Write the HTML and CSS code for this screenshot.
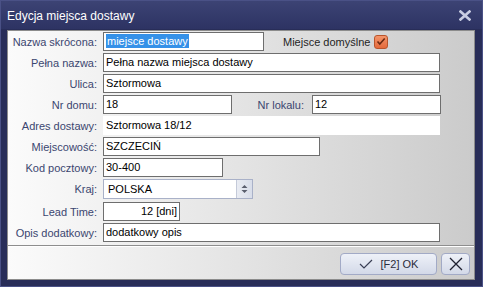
FILE: index.html
```html
<!DOCTYPE html>
<html lang="pl">
<head>
    <meta charset="UTF-8">
    <title>Edycja miejsca dostawy</title>
    <link rel="stylesheet" href="styles.css">
</head>
<body>
    <div class="window">
        <div class="titlebar">
            <span class="title">Edycja miejsca dostawy</span>
            <svg class="close" width="12" height="11" viewBox="0 0 12 11">
                <path d="M1.5 1.5 L10.5 9.5 M10.5 1.5 L1.5 9.5" stroke="#c9cde2" stroke-width="2.6" stroke-linecap="square"/>
            </svg>
        </div>

        <div class="panel">
            <div class="form">
                <div class="row">
                    <label class="lbl">Nazwa skrócona:</label>
                    <div class="field w-short"><span class="selected">miejsce dostawy</span></div>
                    <span class="default-text">Miejsce domyślne</span>
                    <span class="checkbox">
                        <svg width="10" height="9" viewBox="0 0 10 9">
                            <path d="M1.5 4.5 L3.8 7 L8.7 1.5" stroke="#6b2a12" stroke-width="1.6" fill="none"/>
                        </svg>
                    </span>
                </div>
                <div class="row">
                    <label class="lbl">Pełna nazwa:</label>
                    <div class="field w-full">Pełna nazwa miejsca dostawy</div>
                </div>
                <div class="row">
                    <label class="lbl">Ulica:</label>
                    <div class="field w-full">Sztormowa</div>
                </div>
                <div class="row">
                    <label class="lbl">Nr domu:</label>
                    <div class="field w-half">18</div>
                    <label class="lbl lbl-mid">Nr lokalu:</label>
                    <div class="field w-half">12</div>
                </div>
                <div class="row">
                    <label class="lbl">Adres dostawy:</label>
                    <div class="field w-full plain">Sztormowa 18/12</div>
                </div>
                <div class="row">
                    <label class="lbl">Miejscowość:</label>
                    <div class="field w-city">SZCZECIŃ</div>
                </div>
                <div class="row">
                    <label class="lbl">Kod pocztowy:</label>
                    <div class="field w-zip">30-400</div>
                </div>
                <div class="row row-combo">
                    <label class="lbl">Kraj:</label>
                    <div class="field combo w-combo">
                        <span class="combo-text">POLSKA</span>
                        <span class="spin">
                            <svg width="7" height="10" viewBox="0 0 7 10">
                                <path d="M3.5 1 L6.5 4 L0.5 4 Z M0.5 6 L6.5 6 L3.5 9 Z" fill="#5a5f6e"/>
                            </svg>
                        </span>
                    </div>
                </div>
                <div class="row">
                    <label class="lbl">Lead Time:</label>
                    <div class="field w-lead num">12 [dni]</div>
                </div>
                <div class="row">
                    <label class="lbl">Opis dodatkowy:</label>
                    <div class="field w-full">dodatkowy opis</div>
                </div>
            </div>

            <div class="footer">
                <button class="btn btn-ok">
                    <svg width="14" height="10" viewBox="0 0 14 10">
                        <path d="M1 5 L5 9 L13 1" stroke="#3a3f55" stroke-width="1.2" fill="none"/>
                    </svg>
                    <span>[F2] OK</span>
                </button>
                <button class="btn btn-cancel">
                    <svg width="14" height="14" viewBox="0 0 14 14">
                        <path d="M1 1 L13 13 M13 1 L1 13" stroke="#1e2030" stroke-width="1.3"/>
                    </svg>
                </button>
            </div>
        </div>
    </div>
</body>
</html>
```

FILE: styles.css
```css
/* dialog window, dark navy frame */
body {
    margin: 0;
    background-color: #262b55;
    font-family: "Liberation Sans", Arial, sans-serif;
    font-size: 11px;
}

.window {
    width: 483px;
    height: 287px;
    box-sizing: border-box;
    border: 1px solid #4a5186;
    background-color: #282d58;
    display: flex;
    flex-direction: column;
}

.titlebar {
    height: 28px;
    display: flex;
    align-items: center;
    justify-content: space-between;
    padding: 0 11px 0 6px;
    background: linear-gradient(#3c4374, #2d3363);
}

.title {
    color: #fff;
    font-size: 12px;
    padding-top: 2px;
}

.close {
    margin-top: 1px;
}

/* light panel with the form */
.panel {
    margin: 1px 7px 0 6px;
    height: 248px;
    border: 1px solid #8c8c8c;
    background: linear-gradient(to right, #fbfbfb, #e6e6e6 45%, #cbcbcb);
    display: flex;
    flex-direction: column;
}

.form {
    height: 213px;
    padding: 1px 0 0 0;
    display: flex;
    flex-direction: column;
    gap: 2px;
    border-bottom: 1px solid #8e8e8e;
    box-shadow: 0 1px 0 #fff;
}

.row {
    display: flex;
    align-items: center;
    height: 19px;
}

.row-combo {
    height: 20px;
    margin-bottom: 1px;
}

.lbl {
    width: 89px;
    text-align: right;
    color: #3b4670;
    margin-right: 6px;
    white-space: nowrap;
}

.lbl-mid {
    width: 72px;
    margin-right: 8px;
}

.field {
    box-sizing: border-box;
    height: 19px;
    background-color: #fff;
    border: 1px solid #6e6e6e;
    padding: 0 3px 0 2px;
    line-height: 17px;
    color: #000;
    white-space: nowrap;
}

.field.plain {
    border-color: #fff;
}

.num {
    text-align: right;
    padding-right: 2px;
}

.w-full { width: 337px; }
.w-short { width: 161px; }
.w-half { width: 129px; }
.w-city { width: 217px; }
.w-zip { width: 120px; }
.w-combo { width: 150px; }
.w-lead { width: 77px; }

.selected {
    background-color: #3591e8;
    color: #fff;
    padding: 1px 1px;
}

.default-text {
    margin-left: 19px;
    color: #1f1f1f;
}

.checkbox {
    width: 14px;
    height: 14px;
    box-sizing: border-box;
    margin-left: 4px;
    border: 1px solid #b9552c;
    border-radius: 3px;
    background: linear-gradient(#f4956a, #e46a3c);
    display: flex;
    align-items: center;
    justify-content: center;
}

/* combobox */
.combo {
    display: flex;
    height: 20px;
    padding-right: 0;
    border-color: #a9b1c8;
}

.combo-text {
    flex: 1;
    padding-left: 2px;
    line-height: 18px;
}

.spin {
    width: 15px;
    background: linear-gradient(to right, #e9ecf3, #d8dde9);
    border-left: 1px solid #c4cad9;
    display: flex;
    align-items: center;
    justify-content: center;
}

/* bottom button bar */
.footer {
    flex: 1;
    display: flex;
    justify-content: flex-end;
    align-items: center;
    gap: 4px;
    padding: 2px 4px 0 0;
}

.btn {
    height: 22px;
    border: 1px solid #a2aac6;
    border-radius: 4px;
    background: linear-gradient(#eef1f8, #d3d9e8);
    font-family: "Liberation Sans", Arial, sans-serif;
    font-size: 11px;
    color: #2a2d3c;
    display: flex;
    align-items: center;
    justify-content: center;
    padding: 0;
}

.btn-ok {
    width: 97px;
    gap: 8px;
}

.btn-cancel {
    width: 29px;
}
```
